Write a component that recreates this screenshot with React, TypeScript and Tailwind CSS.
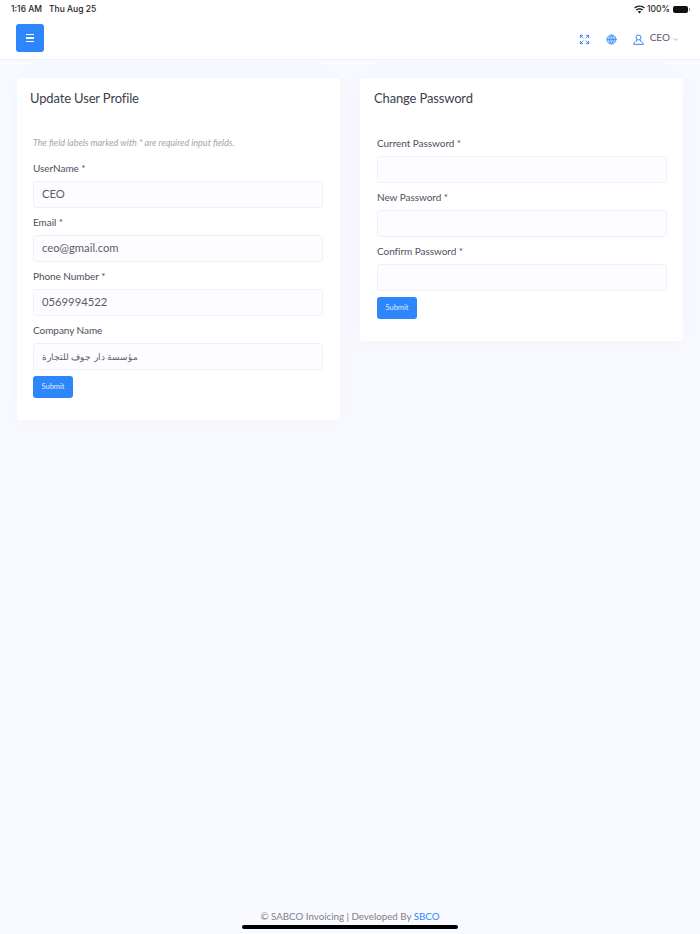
import { ChevronDown, Expand, Globe } from 'lucide-react';

const font = { fontFamily: '"Lato", "Noto Sans", sans-serif' };

function Field({ label, value, small }: { label: string; value?: string; small?: boolean }) {
  return (
    <div className="mb-[5px]">
      <label className="block text-[10px] tracking-[-0.05px] leading-[18px] mb-[4px] text-[#4d4f5c]">{label}</label>
      <div className={`h-[27px] px-[8px] flex items-center rounded-[3px] border border-[#f0efff] bg-[#fdfdff] text-[#5a5c69] ${small ? 'text-[9px]' : 'text-[11.25px]'}`}>
        {value}
      </div>
    </div>
  );
}

function SubmitButton() {
  return (
    <button className="w-[40px] h-[22px] mt-[6px] rounded-[3px] bg-[#2e86fb] text-[#dcebff] text-[7.5px] flex items-center justify-center">
      Submit
    </button>
  );
}

export default function App() {
  return (
    <div style={font} className="relative h-[934px] w-[700px] overflow-hidden bg-[#f9faff] flex flex-col">
      {/* header */}
      <header className="h-[60px] shrink-0 bg-white border-b border-[#f0f1f5]">
        <div className="h-[16px] pl-[11px] pr-[10px] pt-[2px] flex justify-between items-center text-[8.5px] font-medium text-[#1c1c1e]" style={{ fontFamily: '"Inter", sans-serif' }}>
          <div className="flex gap-[7px]">
            <span>1:16 AM</span>
            <span>Thu Aug 25</span>
          </div>
          <div className="flex items-center">
            <svg width="11" height="9" viewBox="0 0 12 9" fill="#111" className="mr-[2px]">
              <path d="M6 0C3.7 0 1.7.9.2 2.4l1 1C2.4 2.2 4.100 1.500 6 1.500s3.600.7 4.800 1.900l1-1C10.300.9 8.300 0 6 0z" />
              <path d="M6 3C4.500 3 3.100 3.600 2.100 4.500l1 1C3.900 4.900 4.900 4.500 6 4.500s2.100.4 2.900 1l1-1C8.900 3.600 7.500 3 6 3z" />
              <path d="M6 6c-.8 0-1.400.3-1.900.7L6 8.800l1.900-2.100C7.400 6.300 6.800 6 6 6z" />
            </svg>
            <span>100%</span>
            <div className="ml-[3px] w-[15px] h-[7px] rounded-[2px] bg-[#111]" />
            <div className="ml-[1px] w-[1px] h-[3px] bg-[#888]" />
          </div>
        </div>
        <div className="h-[43px] pl-[16px] pr-[21px] flex items-center justify-between">
          <button className="w-[28px] h-[28px] mt-[1px] rounded-[3px] bg-[#2e86fb] flex flex-col items-center justify-center gap-[2px]">
            <span className="block w-[8px] h-[1.500px] bg-white" />
            <span className="block w-[8px] h-[1.500px] bg-white" />
            <span className="block w-[8px] h-[1.500px] bg-white" />
          </button>
          <div className="flex items-center mt-[3px] text-[#2e86fb]">
            <Expand size={11} strokeWidth={2} className="mr-[16px]" />
            <Globe size={11} strokeWidth={1.5} fill="#a9cdfd" className="mr-[16px]" />
            <svg width="11" height="11" viewBox="0 0 11 11" fill="none" stroke="currentColor" strokeWidth="1" className="mr-[6px]">
              <circle cx="5.5" cy="3.5" r="2.5" />
              <path d="M3.800 5.800 3.400 7.200C2.200 7.500 1.200 8.200.8 9.800M7.200 5.800 7.600 7.200C8.800 7.500 9.800 8.200 10.200 9.800M.3 10.300h10.400" />
            </svg>
            <span className="text-[10px] text-[#5a5c69] -mt-[4px]">CEO</span>
            <ChevronDown size={7} strokeWidth={2} className="ml-[2px]" />
          </div>
        </div>
      </header>

      {/* cards */}
      <main className="flex-1 flex items-start gap-[20px] pl-[17px] pr-[17px] pt-[18px]">
        <section className="w-[323px] rounded-[3px] bg-white shadow-[0_0_20px_rgba(120,130,200,0.06)] pb-[22px]">
          <h2 className="pl-[13px] pt-[12px] text-[13px] tracking-[-0.15px] leading-[16px] text-[#3d3f4a]">Update User Profile</h2>
          <div className="pl-[16px] pr-[17px] pt-[31px]">
            <p className="text-[9px] italic text-[#a3a5ad] leading-[12px] mb-[10px]">
              The field labels marked with * are required input fields.
            </p>
            <Field label="UserName *" value="CEO" />
            <Field label="Email *" value="ceo@gmail.com" />
            <Field label="Phone Number *" value="0569994522" />
            <Field label="Company Name" value="مؤسسة دار جوف للتجارة" small />
            <SubmitButton />
          </div>
        </section>

        <section className="w-[323px] rounded-[3px] bg-white shadow-[0_0_20px_rgba(120,130,200,0.06)] pb-[22px]">
          <h2 className="pl-[14px] pt-[12px] text-[13px] tracking-[-0.15px] leading-[16px] text-[#3d3f4a]">Change Password</h2>
          <div className="pl-[17px] pr-[16px] pt-[28px]">
            <Field label="Current Password *" />
            <Field label="New Password *" />
            <Field label="Confirm Password *" />
            <SubmitButton />
          </div>
        </section>
      </main>

      {/* footer */}
      <footer className="h-[25px] shrink-0 text-center text-[9.75px] text-[#7f8088] leading-[14px]">
        © SABCO Invoicing | Developed By <span className="text-[#2e86fb]">SBCO</span>
      </footer>
      <div className="absolute left-[242px] top-[925px] w-[216px] h-[4px] rounded-full bg-black" />
    </div>
  );
}
